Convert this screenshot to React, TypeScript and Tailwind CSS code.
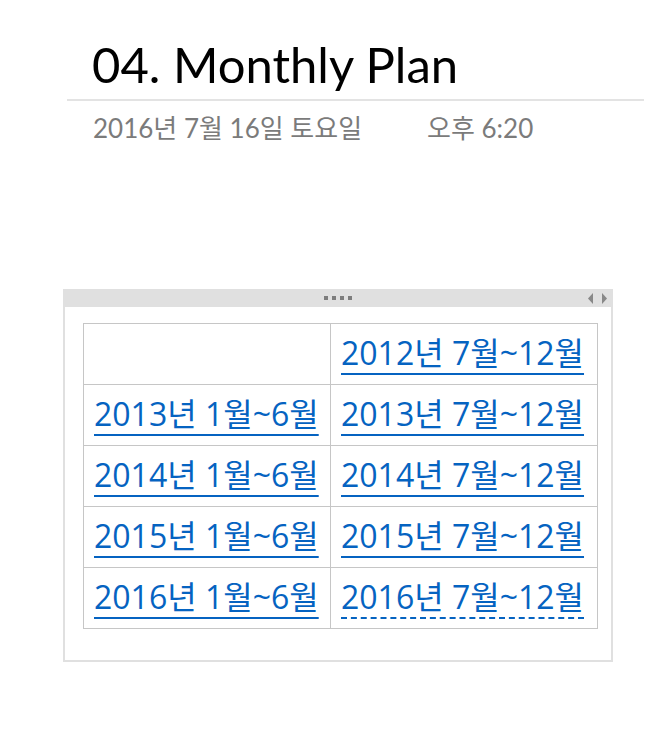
import React from "react";

const rows: [string | null, string][] = [
  [null, "2012년 7월~12월"],
  ["2013년 1월~6월", "2013년 7월~12월"],
  ["2014년 1월~6월", "2014년 7월~12월"],
  ["2015년 1월~6월", "2015년 7월~12월"],
  ["2016년 1월~6월", "2016년 7월~12월"],
];

function Link({ text, dashed }: { text: string; dashed?: boolean }) {
  return (
    <span
      className={
        "text-[#0563c1] text-[32px] leading-none whitespace-nowrap underline underline-offset-[8px] decoration-2 " +
        (dashed ? "decoration-dashed" : "decoration-solid")
      }
      style={{ fontFamily: '"Open Sans", "Noto Sans CJK KR", sans-serif' }}
    >
      {text}
    </span>
  );
}

export default function App() {
  return (
    <div className="w-[655px] h-[739px] bg-white relative overflow-hidden">
      <div className="pt-[36px]">
        <div
          className="pl-[92px] text-[49px] leading-[56px] text-black"
          style={{ fontFamily: 'Lato, "Noto Sans CJK KR", sans-serif' }}
        >
          04. Monthly Plan
        </div>
        <div className="ml-[67px] w-[577px] h-[2px] bg-[#e3e3e3] mt-[7px]" />
        <div
          className="pl-[93px] mt-[12px] text-[26px] leading-[30px] text-[#7b7b7b] flex"
          style={{ fontFamily: 'Lato, "Noto Sans CJK KR", sans-serif' }}
        >
          <span className="w-[334px] whitespace-nowrap">2016년 7월 16일 토요일</span>
          <span className="whitespace-nowrap">오후 6:20</span>
        </div>
      </div>
      <div className="ml-[63px] mt-[146px] w-[550px] border-2 border-[#e0e0e0] border-t-0">
        <div className="h-[18px] bg-[#e0e0e0] relative flex items-center justify-center">
          <div className="flex gap-[4px]">
            <div className="w-[4px] h-[4px] bg-[#7d7d7d]" />
            <div className="w-[4px] h-[4px] bg-[#7d7d7d]" />
            <div className="w-[4px] h-[4px] bg-[#7d7d7d]" />
            <div className="w-[4px] h-[4px] bg-[#7d7d7d]" />
          </div>
          <svg className="absolute right-[2px] top-[4px]" width="22" height="11" viewBox="0 0 22 11">
            <polygon points="6,0 1,5.5 6,11" fill="#888888" />
            <polygon points="15,0 20,5.5 15,11" fill="#888888" />
          </svg>
        </div>
        <div className="pt-[16px] pb-[31px] pl-[18px]">
          <table className="border-collapse">
            <tbody>
              {rows.map((r, i) => (
                <tr key={i} className="h-[61px]">
                  <td className="border border-[#c6c6c6] w-[247px] px-[10px] align-middle text-left">
                    {r[0] && <Link text={r[0]} />}
                  </td>
                  <td className="border border-[#c6c6c6] w-[267px] px-[10px] align-middle text-left">
                    <Link text={r[1]} dashed={i === 4} />
                  </td>
                </tr>
              ))}
            </tbody>
          </table>
        </div>
      </div>
    </div>
  );
}
